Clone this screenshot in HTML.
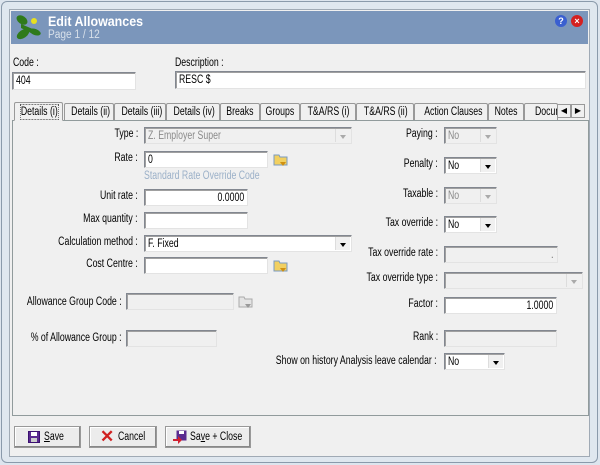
<!DOCTYPE html><html><head><style>
*{margin:0;padding:0;box-sizing:border-box}
body{width:600px;height:465px;overflow:hidden;background:#dde5ee;font-family:"Liberation Sans",sans-serif;font-size:11.5px;color:#000;position:relative}
.a{position:absolute}
.n{display:inline-block;transform:scaleX(.76);transform-origin:left center;white-space:nowrap}
.win{left:1px;top:1px;width:597px;height:462px;border:1px solid #8a9aab;border-radius:6px;background:#dfe7ef}
.client{left:9px;top:9px;width:581px;height:448px;background:#f0f0f0;border:1px solid #a0aab5}
.title{left:11px;top:11px;width:577px;height:33px;background:#7b96bb}
.in{position:absolute;background:#fff;border:1px solid #828790;border-right-color:#e3e3e3;border-bottom-color:#e3e3e3;box-shadow:inset 1px 1px 0 #a0a0a0;padding:2px 3px;line-height:12px;white-space:nowrap;overflow:hidden}
.dis{background:#f0f0f0;color:#8a8a8a}
.r{text-align:right}
.r .n{transform-origin:right center}
.lb{position:absolute;text-align:right;white-space:nowrap}
.lb .n{transform-origin:right center}
.dd{position:absolute;right:1px;top:1px;bottom:1px;width:15px;background:#f0f0f0;border-left:1px solid #ddd}
.dd:after{content:"";position:absolute;left:4px;top:6px;border:3px solid transparent;border-top:4px solid #000}
.dis .dd:after{border-top-color:#aaa}
.tab{position:absolute;top:103px;height:17px;line-height:16px;border:1px solid #999;border-bottom:none;border-radius:2px 2px 0 0;background:#f0f0f0;white-space:nowrap;text-align:center;overflow:hidden}
.tab .n{transform-origin:center}
.btn{position:absolute;top:426px;height:22px;border:1px solid #999;background:#ececec;box-shadow:inset -1px -1px 0 #888,inset 1px 1px 0 #fff;line-height:20px;padding-left:26px;white-space:nowrap}
</style></head><body>
<div class="a win"></div>
<div class="a client"></div>
<div class="a title"></div>
<svg class="a" style="left:13px;top:12px" width="30" height="30" viewBox="0 0 30 30"><g fill="#2f7a1a"><ellipse cx="9" cy="8" rx="6" ry="4" transform="rotate(35 9 8)"/><ellipse cx="10" cy="22" rx="7" ry="4" transform="rotate(-35 10 22)"/><ellipse cx="22" cy="20" rx="6" ry="3" transform="rotate(20 22 20)"/><path d="M8 12 L22 18 L18 21 L8 16Z"/></g><circle cx="21" cy="9" r="3" fill="#e8e020"/></svg>
<div class="a" style="left:48px;top:13px;color:#fff;font-weight:bold;font-size:14px"><span class="n" style="transform:scaleX(.89)">Edit Allowances</span></div>
<div class="a" style="left:48px;top:29px;color:#d8e0ea;font-size:11.5px"><span class="n" style="transform:scaleX(.88)">Page 1 / 12</span></div>
<div class="a" style="left:555px;top:15px;width:12px;height:12px;border-radius:50%;background:#3a5fd0;color:#fff;font-size:9px;font-weight:bold;text-align:center;line-height:12px">?</div>
<div class="a" style="left:571px;top:15px;width:12px;height:12px;border-radius:50%;background:#d42020;color:#fff;font-size:9px;font-weight:bold;text-align:center;line-height:12px">×</div>

<div class="a" style="left:13px;top:57px"><span class="n">Code :</span></div>
<div class="in" style="left:12px;top:72px;width:124px;height:18px"><span class="n">404</span></div>
<div class="a" style="left:175px;top:57px"><span class="n">Description :</span></div>
<div class="in" style="left:175px;top:71px;width:411px;height:18px"><span class="n">RESC $</span></div>

<div class="a" style="left:12px;top:120px;width:577px;height:296px;border:1px solid #919b9c;background:#f0f0f0"></div>
<div class="tab" style="left:14px;top:102px;width:49px;height:19px;border-bottom:1px solid #f0f0f0"><span class="n" style="outline:1px dotted #555;line-height:14px;margin-top:2px">Details (i)</span></div>
<div class="tab" style="left:64px;width:50px"><span class="n">Details (ii)</span></div>
<div class="tab" style="left:114px;width:52px"><span class="n">Details (iii)</span></div>
<div class="tab" style="left:166px;width:54px"><span class="n">Details (iv)</span></div>
<div class="tab" style="left:220px;width:40px"><span class="n">Breaks</span></div>
<div class="tab" style="left:260px;width:40px"><span class="n">Groups</span></div>
<div class="tab" style="left:300px;width:56px"><span class="n">T&amp;A/RS (i)</span></div>
<div class="tab" style="left:356px;width:58px"><span class="n">T&amp;A/RS (ii)</span></div>
<div class="tab" style="left:414px;width:74px"><span class="n">Action Clauses</span></div>
<div class="tab" style="left:488px;width:36px"><span class="n">Notes</span></div>
<div class="tab" style="left:524px;width:34px;text-align:left;padding-left:3px"><span class="n">Documents</span></div>
<div class="a" style="left:557px;top:104px;width:14px;height:14px;border:1px solid #999;background:#f0f0f0;font-size:8px;text-align:center;line-height:12px">◀</div>
<div class="a" style="left:571px;top:104px;width:14px;height:14px;border:1px solid #999;background:#f0f0f0;font-size:8px;text-align:center;line-height:12px">▶</div>

<div class="lb" style="right:462px;top:128px"><span class="n">Type :</span></div>
<div class="in dis" style="left:144px;top:127px;width:208px;height:17px"><span class="n">Z. Employer Super</span><span class="dd"></span></div>
<div class="lb" style="right:462px;top:152px"><span class="n">Rate :</span></div>
<div class="in" style="left:144px;top:151px;width:124px;height:17px"><span class="n">0</span></div>
<div class="a" style="left:144px;top:170px;color:#9bb0c8"><span class="n">Standard Rate Override Code</span></div>
<div class="lb" style="right:462px;top:190px"><span class="n">Unit rate :</span></div>
<div class="in r" style="left:144px;top:189px;width:104px;height:17px"><span class="n">0.0000</span></div>
<div class="lb" style="right:462px;top:213px"><span class="n">Max quantity :</span></div>
<div class="in" style="left:144px;top:212px;width:104px;height:17px"></div>
<div class="lb" style="right:462px;top:236px"><span class="n">Calculation method :</span></div>
<div class="in" style="left:144px;top:235px;width:208px;height:17px"><span class="n">F. Fixed</span><span class="dd"></span></div>
<div class="lb" style="right:462px;top:258px"><span class="n">Cost Centre :</span></div>
<div class="in" style="left:144px;top:257px;width:124px;height:17px"></div>
<div class="lb" style="right:478px;top:296px"><span class="n">Allowance Group Code :</span></div>
<div class="in dis" style="left:126px;top:293px;width:108px;height:17px"></div>
<div class="lb" style="right:478px;top:332px"><span class="n">% of Allowance Group :</span></div>
<div class="in dis" style="left:126px;top:330px;width:91px;height:17px"></div>

<svg class="a" style="left:273px;top:152px" width="16" height="16"><path d="M1 3h5l1 2h7v8H1z" fill="#f2d060" stroke="#7a9ac0"/><path d="M7 10h6l-3 4z" fill="#d09010"/></svg>
<svg class="a" style="left:273px;top:258px" width="16" height="16"><path d="M1 3h5l1 2h7v8H1z" fill="#f2d060" stroke="#7a9ac0"/><path d="M7 10h6l-3 4z" fill="#d09010"/></svg>
<svg class="a" style="left:238px;top:294px" width="16" height="16"><path d="M1 3h5l1 2h7v8H1z" fill="#e4e4e4" stroke="#aaa"/><path d="M7 10h6l-3 4z" fill="#999"/></svg>

<div class="lb" style="right:162px;top:128px"><span class="n">Paying :</span></div>
<div class="in dis" style="left:444px;top:127px;width:53px;height:17px"><span class="n">No</span><span class="dd"></span></div>
<div class="lb" style="right:162px;top:158px"><span class="n">Penalty :</span></div>
<div class="in" style="left:444px;top:157px;width:53px;height:17px"><span class="n">No</span><span class="dd"></span></div>
<div class="lb" style="right:162px;top:188px"><span class="n">Taxable :</span></div>
<div class="in dis" style="left:444px;top:187px;width:53px;height:17px"><span class="n">No</span><span class="dd"></span></div>
<div class="lb" style="right:162px;top:217px"><span class="n">Tax override :</span></div>
<div class="in" style="left:444px;top:216px;width:53px;height:17px"><span class="n">No</span><span class="dd"></span></div>
<div class="lb" style="right:162px;top:247px"><span class="n">Tax override rate :</span></div>
<div class="in dis r" style="left:444px;top:246px;width:114px;height:17px">.</div>
<div class="lb" style="right:162px;top:272px"><span class="n">Tax override type :</span></div>
<div class="in dis" style="left:444px;top:272px;width:139px;height:17px"><span class="dd"></span></div>
<div class="lb" style="right:162px;top:298px"><span class="n">Factor :</span></div>
<div class="in r" style="left:444px;top:297px;width:113px;height:17px"><span class="n">1.0000</span></div>
<div class="lb" style="right:162px;top:331px"><span class="n">Rank :</span></div>
<div class="in dis" style="left:444px;top:330px;width:113px;height:17px"></div>
<div class="lb" style="right:163px;top:355px"><span class="n">Show on history Analysis leave calendar :</span></div>
<div class="in" style="left:444px;top:353px;width:61px;height:17px"><span class="n">No</span><span class="dd"></span></div>

<div class="btn" style="left:14px;width:67px;padding-left:29px"><svg class="a" style="left:13px;top:4px" width="12" height="12"><rect x="0.5" y="0.5" width="11" height="11" fill="#5a2a90" stroke="#3a1070"/><rect x="3" y="1" width="6" height="4" fill="#fff"/><rect x="3" y="7" width="6" height="4" fill="#ccc"/></svg><span class="n"><u>S</u>ave</span></div>
<div class="btn" style="left:89px;width:68px;padding-left:28px"><span class="a" style="left:10px;top:0;color:#d02020;font-size:17px;font-weight:bold">✕</span><span class="n">Cancel</span></div>
<div class="btn" style="left:165px;width:86px;padding-left:24px"><svg class="a" style="left:6px;top:3px" width="16" height="15"><rect x="4.5" y="0.5" width="10" height="10" fill="#5a2a90"/><rect x="7" y="1" width="5" height="3" fill="#fff"/><path d="M1 9h5v-3l4 4-4 4v-3H1z" fill="#d02030"/></svg><span class="n">Sa<u>v</u>e + Close</span></div>
</body></html>
